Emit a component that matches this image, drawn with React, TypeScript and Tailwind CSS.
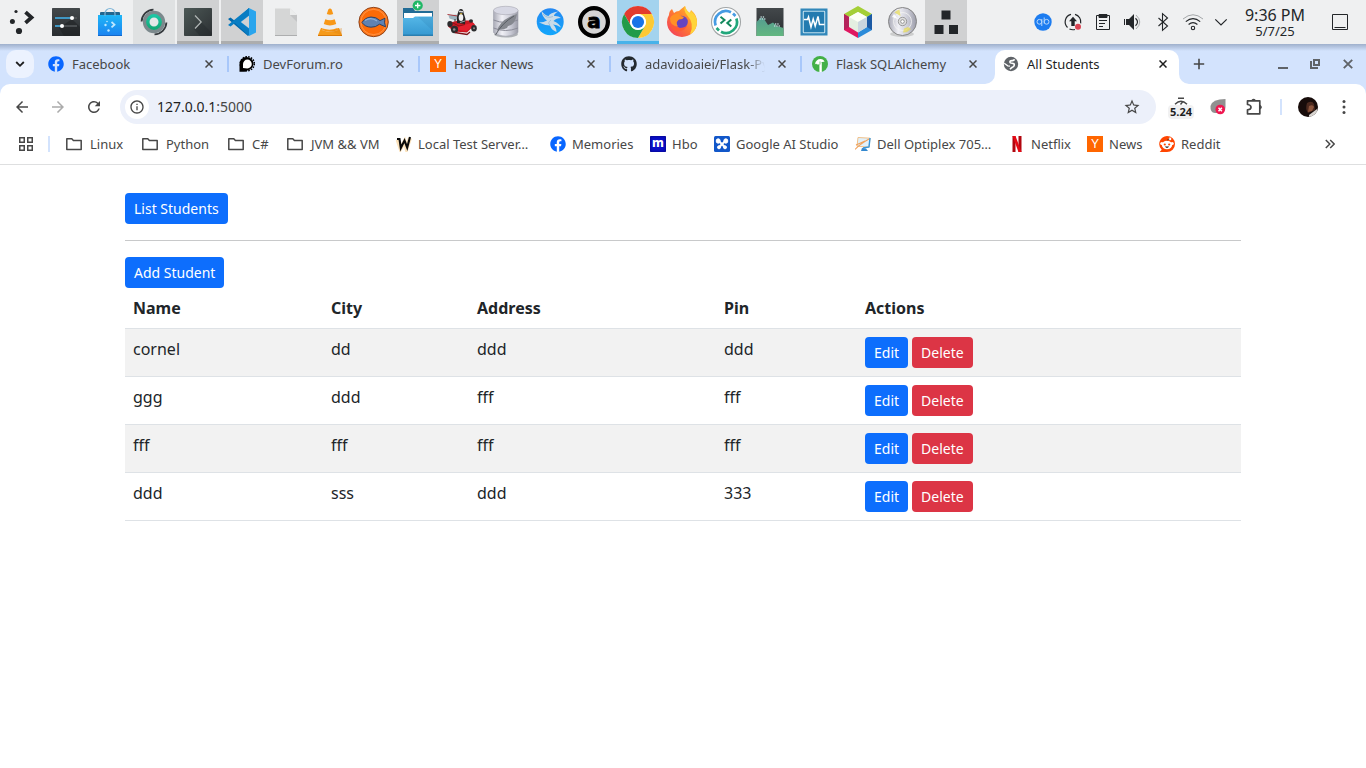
import React from "react";
import { FaFacebook, FaGithub } from "react-icons/fa";
import {
  MdArrowBack,
  MdArrowForward,
  MdRefresh,
  MdInfoOutline,
  MdStarBorder,
} from "react-icons/md";

const Icon = ({ children }: { children: React.ReactNode }) => (
  <svg viewBox="0 0 32 32" className="size-8 overflow-visible">
    {children}
  </svg>
);

const Launcher = () => (
  <Icon>
    <g fill="#232629">
      <circle cx="10" cy="5.5" r="1.6" />
      <circle cx="6.4" cy="15.4" r="2.5" />
      <circle cx="13" cy="25" r="3.1" />
    </g>
    <path d="M19.5 6.2 25.5 11.5 19.5 16.8" fill="none" stroke="#232629" strokeWidth="3.8" />
  </Icon>
);

const Settings = () => (
  <Icon>
    <rect x="2" y="2" width="28" height="28" rx="0.6" fill="url(#dark)" />
    <path d="M22 13 30 21V30H14L9 22Z" fill="#1c1e20" opacity=".5" />
    <path d="M5 12H27M5 20H27" stroke="#55595c" strokeWidth="1.6" />
    <path d="M5 12H22M5 20H12" stroke="#3daee9" strokeWidth="1.6" />
    <circle cx="22" cy="12" r="2" fill="#fff" />
    <circle cx="12" cy="20" r="2" fill="#fff" />
  </Icon>
);

const Bag = () => (
  <Icon>
    <rect x="6" y="6" width="20" height="6" rx="1" fill="#22668f" />
    <rect x="4" y="9" width="24" height="21" fill="url(#bag)" />
    <rect x="4" y="29" width="24" height="1" fill="#1568c9" />
    <path d="M11 10V7.5a5 5 0 0 1 10 0V10" fill="none" stroke="#7fb5d8" strokeWidth="1.2" />
    <g fill="#bfe8ff">
      <circle cx="13" cy="15.5" r=".8" />
      <circle cx="11.5" cy="19" r="1.2" />
      <circle cx="14.5" cy="24.5" r="1.2" />
    </g>
    <path d="m17.5 16 3 2.7-3 2.7" fill="none" stroke="#bfe8ff" strokeWidth="1.8" />
  </Icon>
);

const Ring = () => (
  <Icon>
    <path d="M3.6 15.5A12.4 12.4 0 0 1 15.5 3.6" fill="none" stroke="#34393d" strokeWidth="1.8" />
    <path d="M28.4 16.5A12.4 12.4 0 0 1 16.5 28.4" fill="none" stroke="#34393d" strokeWidth="1.8" />
    <circle cx="16" cy="16" r="8.9" fill="none" stroke="#7c898d" strokeWidth="4.5" />
    <circle cx="16" cy="16" r="6.2" fill="#e5e7e8" stroke="url(#green)" strokeWidth="3.4" />
  </Icon>
);

const Terminal = () => (
  <Icon>
    <rect x="2" y="2" width="28" height="28" rx=".8" fill="url(#term)" />
    <path d="M19 16 30 27v3H18l-6-7Z" fill="#202528" opacity=".35" />
    <path d="m13 9.5 6.2 6.5-6.2 6.5" fill="none" stroke="#b0b6b5" strokeWidth="1.2" />
  </Icon>
);

const Code = () => (
  <Icon>
    <path d="M23 2 9 15 4.5 11.5 2 13 22 30 24 22Z" fill="#0069ad" />
    <path d="M23 30 9 17 4.5 20.5 2 19 23 2V9.5Z" fill="#087dc3" />
    <path d="M23 2 30 5.5V26.5L23 30V22.5L14.5 16 23 9.5Z" fill="#2aa5ed" />
    <path d="M23 9.8V22.2L15 16Z" fill="#d0d1d2" />
  </Icon>
);

const Doc = () => (
  <Icon>
    <path d="M5 2.5H20L27 9V30H5Z" fill="#d5d6d6" />
    <path d="M20 2.5 27 9H20Z" fill="#eceded" />
    <path d="M20 9 27 16V9Z" fill="#c3c4c5" />
    <path d="M5 29.5H27" stroke="#adaeaf" />
  </Icon>
);

const Vlc = () => (
  <Icon>
    <path d="M7 22H25L28 29V30H4V29Z" fill="#f59a1b" />
    <path d="M4 29h24v1H4Z" fill="#d87908" />
    <path d="M14.3 3.5q1.7-1.8 3.4 0L24 24q-8 3.5-16 0Z" fill="#ececec" />
    <path d="M14.3 3.5q1.7-1.8 3.4 0L19.2 8q-3.2 1.6-6.4 0ZM11.3 13.2q4.7 2.2 9.4 0L22.2 18q-6.2 2.8-12.4 0ZM8.7 22.5 8 24q8 3.5 16 0l-.6-2q-7.3 3-14.7.5Z" fill="#f89716" />
    <path d="M15 25 28 29V22Z" fill="#dc7d0d" opacity=".3" />
  </Icon>
);

const Fish = () => (
  <Icon>
    <circle cx="15.6" cy="16" r="14.7" fill="#ff7a1c" stroke="#813a16" strokeWidth=".9" />
    <circle cx="15.6" cy="16" r="12.6" fill="#fc6b08" stroke="#ff984f" strokeWidth=".8" />
    <path d="M4 16.5q3-5 9-5.5 5-.3 9 3.6l5-2.4q-1.2 4 .5 8.6l-6-2.6q-4 3.2-8.5 3Q7 21 4 16.5Z" fill="#5f82b2" stroke="#263b5e" strokeWidth=".9" />
    <path d="M7 14.5q6-4 12 .5" fill="none" stroke="#8fb0d8" strokeWidth="1.2" />
  </Icon>
);

const Files = () => (
  <Icon>
    <path d="M1 2h10l2 3h18v7H1Z" fill="#226c96" />
    <path d="M2 7h28v8H2Z" fill="#fff" />
    <path d="M1 12h10l2-1.5H31V30H1Z" fill="url(#folder)" />
    <path d="M1 29.2H31" stroke="#2879a8" strokeWidth="1.2" />
    <path d="m16 11 15 14V11Z" fill="#277aab" opacity=".2" />
    <circle cx="15.7" cy="-.5" r="5.1" fill="#20b765" />
    <path d="M13 -.5h5.4M15.7-3.2v5.4" stroke="#fff" strokeWidth="1.3" />
  </Icon>
);

const Kart = () => (
  <Icon>
    <path d="m2.500 9.500 8-1 1 4-2 2-6-2Z" fill="#9db4c0" />
    <path d="m1.500 8.500 10 1.500" stroke="#a8383c" strokeWidth="1" />
    <path d="M9 13v5" stroke="#333" strokeWidth="1" />
    <path d="m4 16.500 9-2 12 0 4 4-8 8-13-1-6-5Z" fill="#c81822" />
    <path d="m13 20 13-3 2.500 2-8 6-9-1Z" fill="#e4202f" />
    <path d="m7 17 6 3 6-1.500" fill="none" stroke="#8b1118" strokeWidth="1" />
    <g fill="#2c2c2e">
      <ellipse cx="4" cy="18" rx="2.700" ry="3" />
      <ellipse cx="8.500" cy="23.500" rx="3.600" ry="3.700" />
      <ellipse cx="28" cy="22.200" rx="2.800" ry="3.200" />
      <ellipse cx="25" cy="15" rx="2" ry="1.800" />
    </g>
    <g fill="#8d8d90">
      <circle cx="8.200" cy="23.500" r="1.300" />
      <circle cx="28" cy="22.200" r="1" />
    </g>
    <path d="m9 26.500 12 2 3-2.500" fill="none" stroke="#7d1016" strokeWidth="1.300" />
    <path d="M11 17q-.5-7 1.200-11Q13 2.500 15 3q2.500 0 2.500 3.500l2 6.500-.5 5Z" fill="#232325" />
    <ellipse cx="15" cy="11.500" rx="2.300" ry="3.500" fill="#f1f1f1" />
    <circle cx="14" cy="5.500" r=".9" fill="#fff" />
    <circle cx="16" cy="5.700" r=".9" fill="#fff" />
    <path d="M13.500 7.200h3.200L15 8.800Z" fill="#d9b63a" />
    <path d="m14 16.500 5-1.500" stroke="#9aa0a4" strokeWidth="1.300" />
  </Icon>
);

const Database = () => (
  <Icon>
    <ellipse cx="16" cy="28" rx="12" ry="3.6" fill="#777b83" opacity=".55" />
    <path d="M3.5 4.5V26.5Q16 34 28 26.5V4.5Z" fill="url(#silver)" stroke="#a0a1ac" strokeWidth=".6" />
    <ellipse cx="15.8" cy="4.5" rx="12.3" ry="4.2" fill="#d7d8e4" stroke="#a7a8b1" strokeWidth=".6" />
    <path d="M3.5 14q12 5 24.5 0M3.5 22q12 5 24.5 0" fill="none" stroke="#8b8c98" />
    <path d="M7 25Q10 13 27 8 25 19 18 20l-1 2q-4 2-8 1.500Z" fill="#85888f" />
    <path d="M5.500 29Q12 17 24 10" fill="none" stroke="#54585f" strokeWidth=".9" />
  </Icon>
);

const Bird = () => (
  <Icon>
    <circle cx="16.2" cy="15.7" r="13.5" fill="url(#blue)" />
    <path d="M7.500 5Q11 9.500 14.500 10 16 6.500 24.500 5.500 20 7.500 20 10 24 9.500 27 12 22 12 19.500 15 25 17 27 21.500 22.500 18.500 19 18.500 22.500 21.500 22.500 26 17.500 24 16 19.500 11 19.500 5 16.500 10 16.500 13 14.500 8 11 7.500 5Z" fill="#c9dbe8" />
    <path d="M9 8q4 5 10 2.500M16 19q-3-2 1-5" fill="none" stroke="#8eb3d2" strokeWidth=".7" />
  </Icon>
);

const LetterA = () => (
  <Icon>
    <circle cx="16" cy="16" r="13.9" fill="#d5d5d5" stroke="#000" strokeWidth="4.2" />
    <text x="16" y="21.500" textAnchor="middle" className="font-['DejaVu_Sans',sans-serif] text-[20px] font-bold" fill="#000" stroke="#000" strokeWidth=".8">a</text>
  </Icon>
);

const Chrome = () => (
  <Icon>
    <circle cx="16" cy="16" r="16" fill="#fff" />
    <path d="M2.14 8A16 16 0 0 1 29.86 8H16A8 8 0 0 0 9.07 20Z" fill="#e33b2e" />
    <path d="M29.86 8A16 16 0 0 1 16 32L22.93 20A8 8 0 0 0 16 8Z" fill="#fcc934" />
    <path d="M16 32A16 16 0 0 1 2.14 8L9.07 20A8 8 0 0 0 22.93 20Z" fill="#229b49" />
    <circle cx="16" cy="16" r="7.8" fill="#fff" />
    <circle cx="16" cy="16" r="6.1" fill="#1a73e8" />
  </Icon>
);

const Firefox = () => (
  <Icon>
    <path d="M3 9q0-4 3-6l2 4q2-2 5-2 2-2 6-5 1 5 5 7l1-3q6 5 6 12A15 15 0 0 1 1 16Q1 12 3 9Z" fill="url(#fox)" />
    <path d="M19 0q1 5 5 7l1-2q6 5 6 12-1 9-7 11 5-10-3-19-4-5-2-9Z" fill="#ffd43a" />
    <circle cx="15.6" cy="16" r="6.2" fill="#6744be" />
    <path d="M14 7q-2 2 1 3l3 1q-1 2.500-5 2.500-4 3-1 7-8-.5-8-8Q5 8 14 7Z" fill="#ff9125" />
    <path d="M4 17q7 8 17 3-4 7-12 5-4-2-5-8Z" fill="#ff5a33" />
  </Icon>
);

const Remote = () => (
  <Icon>
    <circle cx="16" cy="16" r="14.5" fill="#fff" stroke="#a1a5a6" strokeWidth="1.1" />
    <path d="M5.600 19.500A11 11 0 0 1 21 6.200" fill="none" stroke="#469be2" strokeWidth="2.700" />
    <path d="M26.400 12.500A11 11 0 0 1 11 25.800" fill="none" stroke="#21a77b" strokeWidth="2.700" />
    <path d="m23 7.500 2.500 2.500" stroke="#469be2" strokeWidth="2.700" />
    <path d="M6.500 22 9 24.500" stroke="#21a77b" strokeWidth="2.700" />
    <path d="m10.500 10.800 4 3.200-4 3.600" fill="none" stroke="#148a5e" strokeWidth="2" />
    <path d="m21.300 13.500-4 3.500 4 3.600" fill="none" stroke="#148a5e" strokeWidth="2" />
  </Icon>
);

const Monitor = () => (
  <Icon>
    <rect x="2.5" y="2" width="27" height="28" fill="url(#dark)" />
    <path d="M2.500 16 6 12.500q3-2 5 2l3 4.500 5-2.500 4 3.500 6.500 2v8h-27Z" fill="url(#graph)" />
    <g fill="none" stroke="#b9cdd0" strokeWidth="1.3" strokeDasharray="1.300 1">
      <path d="M5.500 13h6M6.500 11h4M20 20h6M21 18h4" />
    </g>
  </Icon>
);

const Virt = () => (
  <Icon>
    <rect x="2.5" y="2.5" width="27" height="27" fill="#3187ba" />
    <rect x="5.3" y="5.3" width="21.4" height="21.4" rx=".7" fill="#237bb0" stroke="#bfdeed" strokeWidth="1.1" />
    <path d="M6 13.500h3.500l1-2.500 2.500 10 2.200-8 2 7 2.800-9.500 1.500 8h5" fill="none" stroke="#fff" strokeWidth="1.500" />
  </Icon>
);

const Cube = () => (
  <Icon>
    <path d="m16 0 14 8-14 8L2 8Z" fill="#a4cf36" />
    <path d="M2 8v16l14 8V16Z" fill="#df1760" />
    <path d="M30 8v16l-14 8V16Z" fill="#2b8bd9" />
    <path d="m2 8 5 3v10l-5 3Z" fill="#b4235b" />
    <path d="m30 8-5 3v10l5 3Z" fill="#1b5aa4" />
    <path d="m16 6 9 5v10l-9 5.5L7 21V11Z" fill="#e4efe1" />
    <path d="m7 11 9 5 9-5-9-5Z" fill="#fcfff5" />
    <path d="M16 16v10.5l9-5.5V11Z" fill="#c9d6df" />
  </Icon>
);

const Disc = () => (
  <Icon>
    <ellipse cx="16" cy="28" rx="12" ry="3" fill="#999" opacity=".4" />
    <circle cx="16.5" cy="15.5" r="14" fill="url(#silver)" stroke="#858585" />
    <circle cx="16.5" cy="15.5" r="9" fill="none" stroke="#f5f5f4" opacity=".8" />
    <path d="M8.500 6.500q2.500-2.500 5-3L14.500 10ZM22 21l3 2q-4 4-8 3.500l1-4Z" fill="#e8db51" opacity=".7" />
    <path d="m12 13-4-5-2 3Z" fill="#fff" opacity=".9" />
    <circle cx="16.5" cy="15.5" r="4.2" fill="#dedede" stroke="#8a8a8a" strokeWidth=".8" />
    <circle cx="16.5" cy="15.5" r="1.8" fill="#fff" stroke="#777" strokeWidth=".7" />
  </Icon>
);

const Squares = () => (
  <Icon>
    <path d="M11.5 4.500h9v9h-9ZM4.500 19h9v9h-9ZM19 19h9v9h-9Z" fill="#232629" />
  </Icon>
);

const launchers: { icon: React.ReactNode; tone: string }[] = [
  { icon: <Launcher />, tone: "border-transparent" },
  { icon: <Settings />, tone: "border-transparent" },
  { icon: <Bag />, tone: "border-transparent" },
  { icon: <Ring />, tone: "border-transparent bg-[#dfe1e2]" },
  { icon: <Terminal />, tone: "border-[#acadae] bg-[#d0d1d2]" },
  { icon: <Code />, tone: "border-[#acadae] bg-[#d0d1d2]" },
  { icon: <Doc />, tone: "border-transparent" },
  { icon: <Vlc />, tone: "border-transparent" },
  { icon: <Fish />, tone: "border-transparent" },
  { icon: <Files />, tone: "border-[#acadae] bg-[#d0d1d2]" },
  { icon: <Kart />, tone: "border-transparent" },
  { icon: <Database />, tone: "border-transparent" },
  { icon: <Bird />, tone: "border-transparent" },
  { icon: <LetterA />, tone: "border-transparent" },
  { icon: <Chrome />, tone: "border-[#48b2e9] bg-[#a3d3ee]" },
  { icon: <Firefox />, tone: "border-transparent" },
  { icon: <Remote />, tone: "border-transparent" },
  { icon: <Monitor />, tone: "border-transparent" },
  { icon: <Virt />, tone: "border-transparent" },
  { icon: <Cube />, tone: "border-transparent" },
  { icon: <Disc />, tone: "border-transparent" },
  { icon: <Squares />, tone: "border-[#acadae] bg-[#d0d1d2]" },
];

const Tray = ({ children }: { children: React.ReactNode }) => (
  <svg viewBox="0 0 22 22" className="mx-1 size-[22px] shrink-0" fill="none" stroke="#232629">
    {children}
  </svg>
);

const Gradients = () => (
  <svg className="absolute size-0" aria-hidden="true">
    <defs>
      <linearGradient id="dark" x1="0" y1="0" x2="0" y2="1"><stop stopColor="#43484b" /><stop offset="1" stopColor="#292d30" /></linearGradient>
      <linearGradient id="bag" x1="0" y1="0" x2="0" y2="1"><stop stopColor="#1fb6f7" /><stop offset="1" stopColor="#1b82f0" /></linearGradient>
      <linearGradient id="green" x1="0" y1="0" x2="0" y2="1"><stop stopColor="#1cc7a4" /><stop offset="1" stopColor="#14a877" /></linearGradient>
      <linearGradient id="term" x1="0" y1="0" x2="1" y2="1"><stop stopColor="#4c5856" /><stop offset="1" stopColor="#2c3033" /></linearGradient>
      <linearGradient id="folder" x1="0" y1="0" x2="0" y2="1"><stop stopColor="#55b7e7" /><stop offset="1" stopColor="#3497d0" /></linearGradient>
      <linearGradient id="silver"><stop stopColor="#a9aab6" /><stop offset=".35" stopColor="#f0f0f6" /><stop offset=".7" stopColor="#c9cad5" /><stop offset="1" stopColor="#9b9ca8" /></linearGradient>
      <linearGradient id="blue" x1="0" y1="0" x2="0" y2="1"><stop stopColor="#2588f2" /><stop offset="1" stopColor="#12a6fb" /></linearGradient>
      <linearGradient id="fox" x1="1" y1="0" x2="0" y2="1"><stop stopColor="#ffc62b" /><stop offset=".5" stopColor="#ff7932" /><stop offset="1" stopColor="#f03462" /></linearGradient>
      <linearGradient id="graph" x1="0" y1="0" x2="0" y2="1"><stop stopColor="#559d91" /><stop offset="1" stopColor="#63b780" /></linearGradient>
    </defs>
  </svg>
);

const Panel = () => (
  <header className="flex h-11 shrink-0 bg-[#eff0f1] text-[#232629]">
    <Gradients />
    {launchers.map(({ icon, tone }, i) => (
      <div key={i} className="h-11 w-11 shrink-0 px-px">
        <div className={`flex h-11 items-start justify-center border-b-3 pt-1.5 ${tone}`}>{icon}</div>
      </div>
    ))}
    <div className="ml-auto flex h-11 items-center">
      <Tray>
        <circle cx="11" cy="11" r="8.7" fill="#1c7cf0" stroke="none" />
        <path d="M9.800 8v7M12.200 6.500v6" stroke="#b8d8fc" />
        <circle cx="7.400" cy="10.800" r="2.400" stroke="#b8d8fc" />
        <circle cx="14.600" cy="10.800" r="2.400" stroke="#b8d8fc" />
      </Tray>
      <Tray>
        <path d="M9 3.400a7.800 7.800 0 0 0-3.500 13.100M13 3.400a7.800 7.800 0 0 1 5.700 9M7.500 18q2.500 1.200 5.500.5" strokeWidth="1.200" />
        <path d="m11 5.800 4 4.500h-2.300V15H9.300v-4.700H7Z" fill="#232629" stroke="none" />
        <circle cx="16" cy="15.800" r="3" fill="#da4453" stroke="none" />
      </Tray>
      <Tray>
        <path d="M4.500 4.500h13v14h-13Z" />
        <path d="M7 3.500h8v3H7Z" fill="#232629" />
        <path d="M7 9.500h8M7 12.500h6M7 15.500h4" />
      </Tray>
      <Tray>
        <path d="M2 8h1v6H2ZM4 8h3l5-5v16l-5-5H4Z" fill="#232629" stroke="none" />
        <path d="M13.500 7.200q4 3.800 0 7.600" strokeWidth="1.200" />
        <path d="M14 4q7.500 7 0 14" stroke="#a9abad" />
      </Tray>
      <Tray>
        <path d="m6.500 7 9 8-5 4.300V2.700l5 4.300-9 8" strokeWidth="1.100" />
      </Tray>
      <Tray>
        <path d="M1 8q10-8.500 20 0" stroke="#a4a7a9" />
        <path d="M3.800 10.600q7.200-6 14.400 0M6.600 13.500q4.400-3.600 8.800 0" strokeWidth="1.150" />
        <circle cx="11" cy="17" r="1.700" strokeWidth="1.100" />
      </Tray>
      <Tray>
        <path d="m3.300 8.300 5.700 5.700 5.700-5.700" strokeWidth="1.200" />
      </Tray>
      <div className="-ml-px w-[76px] text-center">
        <div className="text-[16px] leading-[18px]">9:36 PM</div>
        <div className="text-[13px] leading-[14px]">5/7/25</div>
      </div>
      <svg viewBox="0 0 18 18" className="mr-[17px] ml-[18px] size-[18px]" fill="none" stroke="#232629">
        <path d="M1.500 1.500h15v15h-15ZM3.500 14.500h11" />
      </svg>
    </div>
  </header>
);

const HackerY = () => (
  <span className="flex size-4 items-center justify-center bg-[#ff6600] font-['Liberation_Sans',sans-serif] text-[12px] leading-4 text-white">Y</span>
);

const Dev = () => (
  <svg viewBox="0 0 16 16" className="size-4">
    <circle cx="8.300" cy="7.700" r="7" fill="none" stroke="#000" strokeWidth="1.500" strokeDasharray="1.600 1.200" />
    <path d="M.5 15.800V7.500a7 6.700 0 1 1 7.800 6.900q-1 1.400-3 1.400Z" fill="#000" />
    <path d="M4 12V8a4.400 4.400 0 1 1 4.400 4.400Z" fill="#fff" />
  </svg>
);

const Sprout = () => (
  <svg viewBox="0 0 16 16" className="size-4">
    <circle cx="8" cy="8" r="8" fill="#43b047" />
    <path d="M8.600 16V6.500" stroke="#fff" strokeWidth="2.400" />
    <path d="M2.800 8.500Q4 3 8.500 3q3.300 0 4 3-1.500-.7-3 .2-.8 2-3 2.300Q4.500 8.700 4 7.500Z" fill="#fff" />
    <path d="M8 8.500V5.500" stroke="#43b047" strokeWidth=".7" />
  </svg>
);

const Globe = () => (
  <svg viewBox="0 0 16 16" className="size-4">
    <circle cx="8" cy="8" r="7.200" fill="#5f6368" />
    <path d="M11.500 3.300Q11 4.800 9 4.600 6.800 4.600 6.900 6.200 7 7.300 9 7.300q2.600 0 2.300 1.800-.3 1.700-2 2.200-1.300.8-2.300 2" fill="none" stroke="#fff" strokeWidth="1.600" />
    <path d="m1.200 7.200 3.600 2.600 2.200.4" fill="none" stroke="#fff" strokeWidth="1.300" />
  </svg>
);

const Close = () => (
  <svg viewBox="0 0 8 8" className="size-2" fill="none" stroke="currentColor" strokeWidth="1.500">
    <path d="m.5.5 7 7M7.500.5l-7 7" />
  </svg>
);

const Facebook = () => <FaFacebook className="size-4 text-[#0866ff]" />;

const tabs = [
  { title: "Facebook", icon: <Facebook /> },
  { title: "DevForum.ro", icon: <Dev /> },
  { title: "Hacker News", icon: <HackerY /> },
  { title: "adavidoaiei/Flask-Python", icon: <FaGithub className="size-4 text-[#24292f]" />, fade: true },
  { title: "Flask SQLAlchemy", icon: <Sprout /> },
];

const TabStrip = () => (
  <div className="relative flex h-10 shrink-0 bg-[#d3e3fd] pt-1.5 text-[#474747]">
    <div className="absolute inset-x-0 top-0 h-[7px] bg-gradient-to-b from-[#9fb0cc] to-[#d3e3fd]" />
    <div className="relative mr-1.5 ml-1.5 flex size-7 items-center justify-center rounded-[10px] bg-[#ecf2fe]">
      <svg viewBox="0 0 10 10" className="size-2.5" fill="none" stroke="#1f1f1f" strokeWidth="1.800">
        <path d="m1.200 3 3.800 3.800L8.800 3" />
      </svg>
    </div>
    {tabs.map((t, i) => (
      <div key={t.title} className="relative flex h-7 w-[191px] shrink-0 items-center pl-2">
        {t.icon}
        <span className={`ml-2 overflow-hidden text-[13px] leading-5 whitespace-nowrap ${t.fade ? "mr-[3px] w-[120px] [mask-image:linear-gradient(to_right,#000_85%,transparent_100%)]" : "w-[123px]"}`}>{t.title}</span>
        <span className="ml-[10px]"><Close /></span>
        {i < 4 && <span className="ml-[14px] h-4 w-0.5 bg-[#a8c7fa]" />}
      </div>
    ))}
    <div className="relative flex h-[34px] w-[184px] shrink-0 items-start rounded-t-[10px] bg-white pl-2 text-[#1f1f1f]">
      <svg viewBox="0 0 10 10" className="absolute bottom-0 -left-2.5 size-2.5"><path d="M10 0v10H0A10 10 0 0 0 10 0Z" fill="#fff" /></svg>
      <svg viewBox="0 0 10 10" className="absolute -right-2.5 bottom-0 size-2.5"><path d="M0 0v10h10A10 10 0 0 1 0 0Z" fill="#fff" /></svg>
      <div className="flex h-7 items-center">
        <Globe />
        <span className="ml-2 w-[132px] text-[13px] leading-5">All Students</span>
        <Close />
      </div>
    </div>
    <svg viewBox="0 0 12 12" className="mt-2 ml-3.5 size-3" fill="none" stroke="#474747" strokeWidth="1.600"><path d="M6 .8v10.400M.8 6h10.400" /></svg>
    <div className="relative mr-[13px] ml-auto flex h-7 items-center text-[#5f6368]">
      <svg viewBox="0 0 10 10" className="size-2.5"><path d="M0 8h10v2H0Z" fill="currentColor" /></svg>
      <svg viewBox="0 0 10 10" className="ml-[22px] size-2.5" fill="none" stroke="currentColor" strokeWidth="2"><path d="M4 1h5v5H4ZM1 2v7h7" /></svg>
      <svg viewBox="0 0 10 10" className="ml-[23px] size-2.5" fill="none" stroke="currentColor" strokeWidth="1.900"><path d="m.8.8 8.400 8.400M9.200.8.8 9.200" /></svg>
    </div>
  </div>
);

const Toolbar = () => (
  <div className="bg-[#d3e3fd]">
    <div className="flex h-[46px] items-center rounded-t-[10px] bg-white text-[#474747]">
      <MdArrowBack className="ml-[13px] size-[18px]" />
      <MdArrowForward className="ml-[18px] size-[18px] text-[#ababab]" />
      <MdRefresh className="ml-[18px] size-[18px]" />
      <div className="ml-[17px] flex h-[34px] w-[1036px] items-center rounded-full bg-[#ecf0fa] pr-[15px] pl-[5px]">
        <span className="flex size-6 items-center justify-center rounded-full bg-white"><MdInfoOutline className="size-4" /></span>
        <span className="ml-2 text-[14px] leading-5"><span className="text-[#1f1f1f]">127.0.0.1</span>:5000</span>
        <MdStarBorder className="ml-auto size-[18px]" />
      </div>
      <div className="ml-3 flex h-[26px] w-[26px] flex-col items-center pt-[3px]">
        <svg viewBox="0 0 14 8" className="h-2 w-3.5 shrink-0" fill="none" stroke="#474747" strokeWidth="1.400"><path d="M4 1.200h6M1 7.200q6-6 12 0M6.500 7.500l2-2.500" /></svg>
        <span className="rounded-[4px] bg-[#f1f1f2] px-0.5 font-['Open_Sans',sans-serif] text-[11px] leading-[14px] font-bold text-[#1f1f1f]">5.24</span>
      </div>
      <svg viewBox="0 0 18 18" className="ml-[15px] size-[18px]">
        <path d="M1.500 8Q3 1 16.500 1v8q0 6-6 6H6Q1 15 1.500 8Z" fill="#909090" />
        <circle cx="11.200" cy="11.500" r="4.800" fill="#f0164f" />
        <path d="m9.500 9.800 3.400 3.400m0-3.400-3.400 3.400" stroke="#fff" strokeWidth="1.500" />
      </svg>
      <svg viewBox="0 0 18 18" className="ml-[18px] size-[18px]" fill="none" stroke="#474747" strokeWidth="1.700">
        <path d="M2.500 2.800h12.300v13H2.500v-4Q6 11.500 6 9.200T2.500 6.500Z" strokeLinejoin="round" />
        <path d="M7.200 2.200q1.400-1.800 2.800 0ZM15.300 7.800q1.800 1.400 0 2.800Z" fill="#474747" strokeWidth="1.300" />
      </svg>
      <span className="ml-[17px] h-4 w-0.5 bg-[#d3e3fd]" />
      <svg viewBox="0 0 20 20" className="ml-4 size-5 rounded-full">
        <path d="M0 0h20v20H0Z" fill="#170c0a" />
        <path d="M9 6q5-3 7 1l1 6-7 3q-3-4-1-10Z" fill="#4b291e" />
        <path d="M11 9q4-2 5 1l-2 4-4 1Z" fill="#8b543c" />
        <path d="m11 18 8-6 1 8h-9Z" fill="#d8d4d0" />
      </svg>
      <svg viewBox="0 0 18 18" className="ml-[17px] size-[18px]" fill="#474747">
        <circle cx="9" cy="3.500" r="1.500" />
        <circle cx="9" cy="9" r="1.500" />
        <circle cx="9" cy="14.500" r="1.500" />
      </svg>
    </div>
  </div>
);

const Folder = () => (
  <svg viewBox="0 0 16 16" className="mr-0.5 size-4" fill="none" stroke="#474747" strokeWidth="1.500" strokeLinejoin="round">
    <path d="M.8 2.800h5l1.600 1.700h7.800v9H.8Z" />
  </svg>
);

const bookmarks = [
  { label: "Linux", w: "w-[76px]", icon: <Folder /> },
  { label: "Python", w: "w-[86px]", icon: <Folder /> },
  { label: "C#", w: "w-[59px]", icon: <Folder /> },
  { label: "JVM && VM", w: "w-[109px]", icon: <Folder /> },
  {
    label: "Local Test Server…", w: "w-[154px]",
    icon: (
      <svg viewBox="0 0 16 16" className="size-4" fill="none">
        <path d="m1.500 3.500 3 9 4-7 2 7L14 2" stroke="#fbe2bb" strokeWidth="4" />
        <path d="M1 3h2.500l1.300 9L8.500 4.500l2.700 7L14 1" stroke="#0b0b0b" strokeWidth="2.100" />
      </svg>
    ),
  },
  { label: "Memories", w: "w-[100px]", icon: <Facebook /> },
  {
    label: "Hbo", w: "w-[64px]",
    icon: <span className="flex size-4 items-center justify-center rounded-[1px] bg-[#0a0fc8] pb-[3px] font-['Noto_Sans',sans-serif] text-[12px] leading-4 font-extrabold text-white shadow-[inset_0_0_3px_#000070]">m</span>,
  },
  {
    label: "Google AI Studio", w: "w-[141px]",
    icon: (
      <svg viewBox="0 0 16 16" className="size-4">
        <rect width="16" height="16" rx="1.500" fill="#1257c9" />
        <g fill="#fff" stroke="#fff">
          <path d="M8 8 4 4.500M8 8l4-3.500M8 8l-3 3.500M8 8l3 3.500" strokeWidth="2" />
          <ellipse cx="4.200" cy="5" rx="2" ry="2.200" />
          <ellipse cx="11.800" cy="5" rx="2" ry="2.200" />
          <circle cx="5" cy="11.300" r="1.500" />
          <circle cx="11" cy="11.300" r="1.500" />
        </g>
      </svg>
    ),
  },
  {
    label: "Dell Optiplex 705…", w: "w-[154px]",
    icon: (
      <svg viewBox="0 0 16 16" className="size-4">
        <path d="m3 1.500 12 .7-1 9-12-1Z" fill="#e1f1fb" stroke="#f0c089" />
        <path d="m15 2-1 9-6 1" fill="none" stroke="#3495da" strokeWidth="1.400" />
        <path d="m7 12 4 .5 2 2.500H6Z" fill="#3388cf" />
        <path d="M0 13.500Q5 8 14 3M1 9l9-4" stroke="#f0a25d" strokeWidth="1.100" fill="none" />
      </svg>
    ),
  },
  {
    label: "Netflix", w: "w-[78px]",
    icon: (
      <svg viewBox="0 0 16 16" className="size-4">
        <path d="M3.500 0h3v16h-3ZM9.500 0h3v16h-3Z" fill="#b1060f" />
        <path d="M3.500 0h3l6 16h-3Z" fill="#e50914" />
      </svg>
    ),
  },
  { label: "News", w: "w-[72px]", icon: <HackerY /> },
  {
    label: "Reddit", w: "w-[80px]",
    icon: (
      <svg viewBox="0 0 16 16" className="size-4">
        <path d="M8 0a8 8 0 1 1 0 16H.7l2-2.300A8 8 0 0 1 8 0Z" fill="#ff4500" />
        <circle cx="2.800" cy="7.500" r="1.600" fill="#fff" />
        <circle cx="13.200" cy="7.500" r="1.600" fill="#fff" />
        <circle cx="11" cy="2.900" r="1.300" fill="#fff" />
        <path d="M8 5q.2-2 2.500-2" fill="none" stroke="#222" strokeWidth=".6" />
        <ellipse cx="8" cy="9" rx="5.200" ry="4.200" fill="#fff" />
        <circle cx="5.800" cy="8.500" r="1.100" fill="#ff4500" />
        <circle cx="10.200" cy="8.500" r="1.100" fill="#ff4500" />
        <path d="M5.800 10.600h4.400q-2.200 2.600-4.400 0Z" fill="#222" />
      </svg>
    ),
  },
];

const Bookmarks = () => (
  <div className="flex h-[35px] shrink-0 items-start border-b border-[#dedfe0] bg-white text-[13px] text-[#474747]">
    <div className="flex h-7 w-full items-center">
      <svg viewBox="0 0 14 14" className="ml-[19px] size-3.5 shrink-0" fill="none" stroke="#474747" strokeWidth="1.500">
        <path d="M.75.75h4.500v4.500H.75ZM8.750.75h4.500v4.500h-4.500ZM.75 8.750h4.500v4.500H.75ZM8.750 8.750h4.500v4.500h-4.500Z" />
      </svg>
      <span className="mr-4 ml-[15px] h-4 w-0.5 shrink-0 bg-[#d3e3fd]" />
      {bookmarks.map((b) => (
        <div key={b.label} className={`flex shrink-0 items-center gap-1.5 leading-5 whitespace-nowrap ${b.w}`}>
          <span className="shrink-0">{b.icon}</span>
          <span>{b.label}</span>
        </div>
      ))}
      <svg viewBox="0 0 10 10" className="mr-[31px] ml-auto size-2.5" fill="none" stroke="#474747" strokeWidth="1.500"><path d="m.8 1 4 4-4 4M5.200 1l4 4-4 4" /></svg>
    </div>
  </div>
);

const Button = ({ children, danger }: { children: string; danger?: boolean }) => (
  <button className={`block h-[31px] rounded-[4px] px-[9px] text-[14px] leading-[21px] text-white ${danger ? "bg-[#dc3545]" : "bg-[#0d6efd]"}`}>{children}</button>
);

const students = [
  ["cornel", "dd", "ddd", "ddd"],
  ["ggg", "ddd", "fff", "fff"],
  ["fff", "fff", "fff", "fff"],
  ["ddd", "sss", "ddd", "333"],
];

export default function App() {
  return (
    <div className="flex h-[768px] w-[1366px] flex-col overflow-hidden bg-white font-['Noto_Sans',sans-serif]">
      <Panel />
      <TabStrip />
      <Toolbar />
      <Bookmarks />
      <main className="mx-[125px] pt-7 text-[16px] leading-6 text-[#212529]">
        <Button>List Students</Button>
        <hr className="my-4 border-t border-[#c8c9ca]" />
        <Button>Add Student</Button>
        <table className="w-full table-fixed border-separate border-spacing-0">
          <colgroup>
            <col className="w-[198px]" />
            <col className="w-[146px]" />
            <col className="w-[247px]" />
            <col className="w-[141px]" />
            <col className="w-[384px]" />
          </colgroup>
          <thead>
            <tr>
              {["Name", "City", "Address", "Pin", "Actions"].map((h) => (
                <th key={h} className="border-b border-[#dee2e6] p-2 text-left font-bold">{h}</th>
              ))}
            </tr>
          </thead>
          <tbody>
            {students.map((row, i) => (
              <tr key={i} className="odd:bg-[#f2f2f2]">
                {row.map((cell, j) => (
                  <td key={j} className="border-b border-[#dee2e6] p-2 align-top">{cell}</td>
                ))}
                <td className="border-b border-[#dee2e6] p-2 align-top">
                  <div className="flex gap-1">
                    <Button>Edit</Button>
                    <Button danger>Delete</Button>
                  </div>
                </td>
              </tr>
            ))}
          </tbody>
        </table>
      </main>
    </div>
  );
}
